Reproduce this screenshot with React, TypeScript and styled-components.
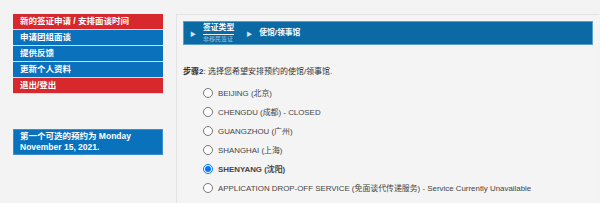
import { FC } from "react";
import styled, { createGlobalStyle } from "styled-components";

const GlobalStyle = createGlobalStyle`
  html, body {
    margin: 0;
    background: #f3f3f3;
    font-family: "Liberation Sans", "Noto Sans CJK SC", Arial, sans-serif;
  }
`;

const Page = styled.div`
  display: flex;
  align-items: flex-start;
  gap: 13px;
  padding: 14px 1px 0 13px;
  height: 189px;
  overflow: hidden;
`;

const Sidebar = styled.div`
  width: 150px;
  flex-shrink: 0;
  display: flex;
  flex-direction: column;
`;

const Menu = styled.div`
  display: flex;
  flex-direction: column;
`;

const MenuItem = styled.div<{ $red?: boolean }>`
  height: 15px;
  line-height: 15px;
  padding-left: 7px;
  border-bottom: 1px solid #cfe0ee;
  background: ${(p) => (p.$red ? "#d6282d" : "#0a72bd")};
  color: #fff;
  font-size: 8.5px;
  font-weight: bold;
  white-space: nowrap;
`;

const InfoBox = styled.div`
  margin-top: 35px;
  background: #0a72bd;
  border: 1px solid #3b8fd0;
  color: #fff;
  font-size: 8.5px;
  font-weight: bold;
  line-height: 11px;
  padding: 0 6px;
  height: 24px;
  display: flex;
  flex-direction: column;
  justify-content: center;
`;

const Panel = styled.div`
  flex: 1;
  align-self: stretch;
  border-top: 1px solid #e3e3e3;
  border-left: 1px solid #e3e3e3;
  background: #f4f4f4;
  padding: 6px 6px 0 6px;
`;

const Banner = styled.div`
  height: 22px;
  background: #0b69a3;
  border: 1px solid #5aa0cf;
  display: flex;
  align-items: center;
  padding-left: 6px;
  color: #fff;
`;

const Arrow = styled.span`
  font-size: 6px;
  color: #cfe3f2;
  margin-right: 7px;
`;

const Crumb = styled.div`
  display: flex;
  flex-direction: column;
  margin-right: 12px;
`;

const CrumbTitle = styled.span<{ $underline?: boolean }>`
  font-size: 7.8px;
  font-weight: bold;
  line-height: 10px;
  padding-bottom: ${(p) => (p.$underline ? "1px" : "0")};
  border-bottom: ${(p) => (p.$underline ? "1px solid #e6f0f7" : "none")};
`;

const CrumbSub = styled.span`
  font-size: 6px;
  line-height: 8px;
  color: #9fc3de;
`;

const StepText = styled.div`
  margin-top: 21px;
  font-size: 8px;
  color: #333;
  line-height: 11px;
  b {
    font-weight: bold;
  }
`;

const Options = styled.div`
  margin-top: 6px;
  padding-left: 20px;
  display: flex;
  flex-direction: column;
`;

const Option = styled.label<{ $bold?: boolean }>`
  display: flex;
  align-items: center;
  height: 19px;
  font-size: 7.9px;
  color: #444;
  font-weight: ${(p) => (p.$bold ? "bold" : "normal")};
  white-space: nowrap;
  input {
    width: 10px;
    height: 10px;
    margin: 0 5px 0 0;
  }
`;

const cities = [
  { label: "BEIJING (北京)" },
  { label: "CHENGDU (成都) - CLOSED" },
  { label: "GUANGZHOU (广州)" },
  { label: "SHANGHAI (上海)" },
  { label: "SHENYANG (沈阳)", checked: true },
  { label: "APPLICATION DROP-OFF SERVICE (免面谈代传递服务) - Service Currently Unavailable" },
];

const App: FC = () => {
  return (
    <>
      <GlobalStyle />
      <Page>
        <Sidebar>
          <Menu>
            <MenuItem $red>新的签证申请 / 安排面谈时间</MenuItem>
            <MenuItem>申请团组面谈</MenuItem>
            <MenuItem>提供反馈</MenuItem>
            <MenuItem>更新个人资料</MenuItem>
            <MenuItem $red>退出/登出</MenuItem>
          </Menu>
          <InfoBox>
            <span>第一个可选的预约为 Monday</span>
            <span>November 15, 2021.</span>
          </InfoBox>
        </Sidebar>
        <Panel>
          <Banner>
            <Arrow>▶</Arrow>
            <Crumb>
              <CrumbTitle $underline>签证类型</CrumbTitle>
              <CrumbSub>非移民签证</CrumbSub>
            </Crumb>
            <Arrow>▶</Arrow>
            <Crumb>
              <CrumbTitle>使馆/领事馆</CrumbTitle>
            </Crumb>
          </Banner>
          <StepText>
            <b>步骤2</b>: 选择您希望安排预约的使馆/领事馆.
          </StepText>
          <Options>
            {cities.map((c, i) => (
              <Option key={i} $bold={c.checked}>
                <input type="radio" name="post" defaultChecked={c.checked} />
                {c.label}
              </Option>
            ))}
          </Options>
        </Panel>
      </Page>
    </>
  );
};

export default App;
